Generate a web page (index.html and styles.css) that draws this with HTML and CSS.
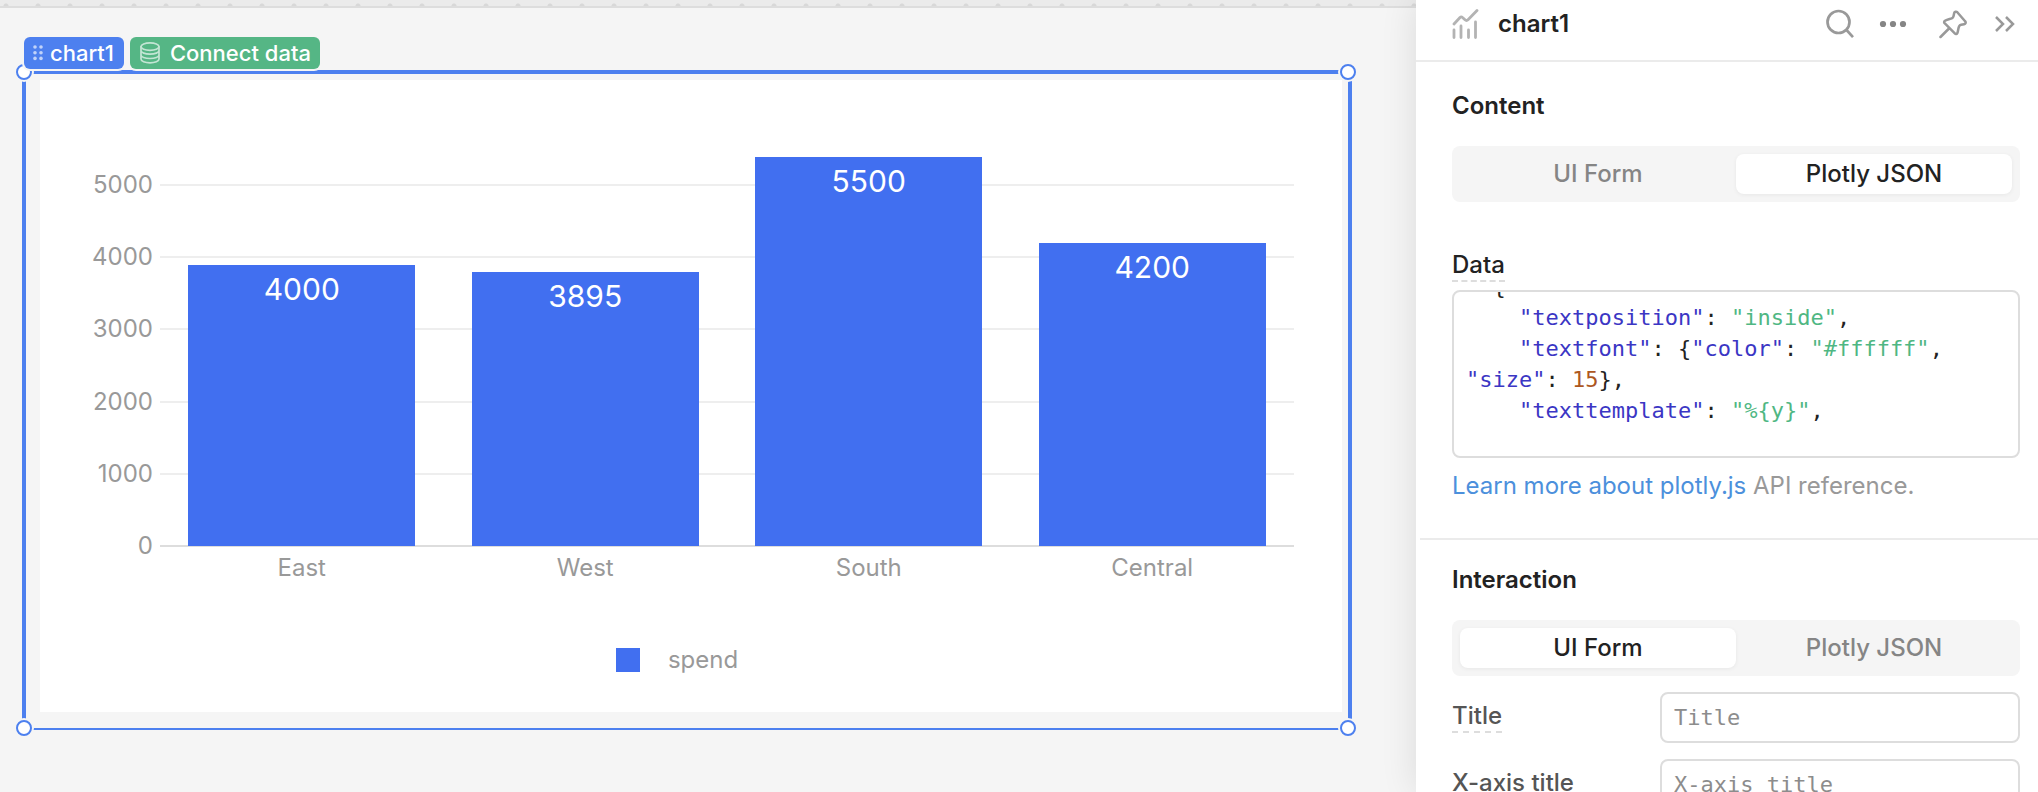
FILE: index.html
```html
<!DOCTYPE html>
<html lang="en">
<head>
<meta charset="utf-8">
<title>chart1</title>
<link rel="stylesheet" href="styles.css">
</head>
<body>
<div class="app">
  <main class="canvas">
    <div class="canvas-edge"></div>
    <div class="tags">
      <button class="tag tag-name" type="button">
        <svg width="10" height="16" viewBox="0 0 10 16" fill="currentColor" opacity=".65"><circle cx="2" cy="2" r="1.8"/><circle cx="8" cy="2" r="1.8"/><circle cx="2" cy="7.700" r="1.8"/><circle cx="8" cy="7.700" r="1.8"/><circle cx="2" cy="13.400" r="1.8"/><circle cx="8" cy="13.400" r="1.8"/></svg>
        <span>chart1</span>
      </button>
      <button class="tag tag-data" type="button">
        <svg width="20" height="22" viewBox="0 0 20 22" fill="none" stroke="currentColor" stroke-width="1.700" opacity=".65"><ellipse cx="10" cy="4.600" rx="9" ry="3.700"/><path d="M1 4.600v12.800c0 2 4 3.700 9 3.700s9-1.700 9-3.700V4.600M1 8.900c0 2 4 3.600 9 3.600s9-1.600 9-3.600M1 13.200c0 2 4 3.600 9 3.600s9-1.600 9-3.600" transform="translate(0 -.3)"/></svg>
        <span>Connect data</span>
      </button>
    </div>
    <section class="frame">
      <i class="handle handle-tl"></i><i class="handle handle-tr"></i><i class="handle handle-bl"></i><i class="handle handle-br"></i>
      <div class="card">
        <div class="plot">
          <ul class="scale">
            <li><span>5000</span></li><li><span>4000</span></li><li><span>3000</span></li><li><span>2000</span></li><li><span>1000</span></li><li class="zero"><span>0</span></li>
          </ul>
          <div class="bars">
            <div class="bar" style="height:70.9%">4000</div>
            <div class="bar" style="height:69.1%">3895</div>
            <div class="bar" style="height:98.1%">5500</div>
            <div class="bar" style="height:76.4%">4200</div>
          </div>
          <div class="names"><span>East</span><span>West</span><span>South</span><span>Central</span></div>
        </div>
        <div class="legend"><i class="swatch"></i><span>spend</span></div>
      </div>
    </section>
  </main>

  <aside class="panel">
    <header class="head">
      <svg width="28" height="30" viewBox="0 0 28 30" fill="none" stroke="#b3b3b3" stroke-width="2.800" stroke-linecap="round" stroke-linejoin="round"><path d="M2 15l6-6.500c1-1 1.500-1 2.500 0l2.500 2.300c1 1 2 1 3 0L25 1.500M2 21v7.500M9 17v11.500M16.500 21v7.500M23.500 13v15.500"/></svg>
      <h1 class="head-title">chart1</h1>
      <div class="actions">
        <button class="icon" type="button" aria-label="Search"><svg width="28" height="30" viewBox="0 0 28 30" fill="none" stroke="#999" stroke-width="2.700"><circle cx="12.500" cy="13" r="11"/><path d="M20.500 21l6.500 7.200"/></svg></button>
        <button class="icon" type="button" aria-label="More"><svg width="28" height="8" viewBox="0 0 28 8" fill="#858585"><circle cx="4" cy="4" r="3.100"/><circle cx="14" cy="4" r="3.100"/><circle cx="24" cy="4" r="3.100"/></svg></button>
        <button class="icon icon-pin" type="button" aria-label="Pin"><svg width="28" height="30" viewBox="0 0 28 30" fill="none" stroke="#999" stroke-width="2.500" stroke-linecap="round" stroke-linejoin="round"><path d="M1.500 28l8.500-8.500M18.300 3.200c-1-1-2.800-.5-3.100.9l-.7 3.100c-.2 1-.8 1.700-1.700 2.100-1.800.8-4.300.8-6.800 2.500-.9.600-1.200 1.500-.4 2.400L15.800 24.400c.9.900 2.100.700 2.600-.5.900-2.200.7-4.700 1.700-6.600.4-.8 1.100-1.300 2-1.500l3-.6c1.500-.3 2.100-1.900 1-3z"/></svg></button>
        <button class="icon" type="button" aria-label="Collapse"><svg width="22" height="18" viewBox="0 0 22 18" fill="none" stroke="#999" stroke-width="2.500"><path d="M2 2l7 7-7 7M12 2l7 7-7 7"/></svg></button>
      </div>
    </header>

    <section class="section">
      <h2 class="heading">Content</h2>
      <div class="segmented">
        <button class="segment" type="button">UI Form</button>
        <button class="segment is-active" type="button">Plotly JSON</button>
      </div>
      <div class="field-label"><span class="hint" id="data-label">Data</span></div>
      <div class="editor" role="textbox" aria-multiline="true" aria-labelledby="data-label" contenteditable="true" spellcheck="false"><div class="code">  {
    <b class="key">"textposition"</b>: <b class="str">"inside"</b>,
    <b class="key">"textfont"</b>: {<b class="key">"color"</b>: <b class="str">"#ffffff"</b>, <b class="key">"size"</b>: <b class="num">15</b>},
    <b class="key">"texttemplate"</b>: <b class="str">"%{y}"</b>,
</div></div>
      <p class="help"><a href="#">Learn more about plotly.js</a> API reference.</p>
    </section>

    <section class="section section-next">
      <h2 class="heading">Interaction</h2>
      <div class="segmented">
        <button class="segment is-active" type="button">UI Form</button>
        <button class="segment" type="button">Plotly JSON</button>
      </div>
      <div class="rows">
        <div class="row"><label for="title"><span class="hint">Title</span></label><input id="title" type="text" placeholder="Title"></div>
        <div class="row"><label for="xtitle"><span class="hint">X-axis title</span></label><input id="xtitle" type="text" placeholder="X-axis title"></div>
      </div>
    </section>
  </aside>
</div>
</body>
</html>
```

FILE: styles.css
```css
* { box-sizing: border-box; }
body { margin: 0; font-family: Inter, "Liberation Sans", sans-serif; color: #222; }
h1, h2, p, ul { margin: 0; padding: 0; }
button { border: 0; padding: 0; background: none; font: inherit; color: inherit; }
svg { display: block; flex: none; }

.app { display: flex; height: 100vh; overflow: hidden; }

/* Canvas */
.canvas { flex: 1; min-width: 0; display: flex; flex-direction: column; background: #f5f5f5; padding-bottom: 62px; }
.canvas-edge {
  flex: none; height: 8px; border-bottom: 2px solid #ddd;
  background: radial-gradient(circle at 6px 6px, #d8d8d8 2px, transparent 3px) 0 0 / 32px 8px, #ebebeb;
}
.tags { display: flex; gap: 6px; margin: 29px 0 1px 24px; position: relative; z-index: 2; }
.tag {
  display: flex; align-items: center; height: 32px; border-radius: 6px; color: #fff;
  font-size: 22px; font-weight: 500; line-height: 32px; white-space: nowrap; box-shadow: 0 0 0 2px #f5f5f5;
}
.tag-name { gap: 7px; padding: 0 10px 0 9px; background: #4d80ef; }
.tag-data { gap: 10px; padding: 0 9px 0 10px; background: #55b685; }

.frame {
  flex: 1; min-height: 0; display: flex; position: relative; margin: 0 64px 0 22px; padding: 6px 6px 16px 14px;
  border: 4px solid #4d80ef; border-bottom-width: 2px;
}
.handle {
  position: absolute; width: 16px; height: 16px; border: 2px solid #4d80ef; border-radius: 50%;
  background: #fff; box-shadow: 0 0 0 2px #f5f5f5;
}
.handle-tl, .handle-tr { top: -10px; }
.handle-bl, .handle-br { bottom: -8px; }
.handle-tl, .handle-bl { left: -10px; }
.handle-tr, .handle-br { right: -8px; }

.card { flex: 1; display: flex; flex-direction: column; background: #fff; padding: 69px 48px 38px; color: #999; font-size: 24px; font-weight: 400; line-height: 28px; }

/* Bar chart: six scale rows share the height; the bars end at the middle of the last row */
.plot { flex: 1; display: grid; grid-template-columns: 72px 1fr; grid-template-rows: 11fr 1fr; }
.scale { grid-area: 1 / 1 / 3 / 3; display: flex; flex-direction: column; list-style: none; }
.scale li { flex: 1; display: flex; align-items: center; gap: 7px; }
.scale li::after { content: ""; flex: 1; height: 2px; background: #eee; }
.scale .zero::after { background: #ddd; }
.scale span { width: 65px; text-align: right; }
.bars { grid-area: 1 / 2; display: grid; grid-template-columns: repeat(4, 1fr); align-items: end; }
.bar { width: 80%; margin: 0 auto; padding-top: 6px; background: #416ff0; color: #fff; font-size: 30px; line-height: 36px; text-align: center; }
.names { grid-area: 2 / 2; display: grid; grid-template-columns: repeat(4, 1fr); align-items: end; text-align: center; }
.legend { display: flex; justify-content: center; align-items: center; gap: 28px; margin: 64px 28px 0 0; }
.swatch { width: 24px; height: 24px; background: #416ff0; }

/* Property panel */
.panel { flex: 0 0 622px; position: relative; background: #fff; box-shadow: 0 0 34px rgba(0, 0, 0, .11); font-size: 24px; line-height: 28px; }
.head { display: flex; align-items: center; gap: 18px; height: 62px; padding: 0 22px 12px 36px; border-bottom: 2px solid #ebebeb; }
.head-title, .heading { font-size: 24px; font-weight: 600; line-height: 28px; }
.actions { display: flex; align-items: center; gap: 25px; margin-left: auto; }
.icon-pin { margin: 0 2px 0 7px; }

.section { padding: 30px 18px 38px 36px; }
.section-next { margin-left: 4px; padding-top: 26px; padding-left: 32px; border-top: 2px solid #ebebeb; }
.segmented { display: grid; grid-template-columns: 1fr 1fr; margin-top: 26px; padding: 8px; border-radius: 8px; background: #f5f5f5; }
.segment { height: 40px; border-radius: 8px; color: #858585; font-weight: 500; }
.segment.is-active { background: #fff; color: #222; box-shadow: 0 1px 4px rgba(0, 0, 0, .06); }

.hint { display: inline-block; padding-bottom: 1px; border-bottom: 2px dashed #ddd; }
.field-label { display: flex; margin-top: 49px; font-weight: 500; }
.editor {
  display: flex; align-items: flex-end; height: 168px; margin-top: 8px; padding: 0 12px 0;
  overflow: hidden; border: 2px solid #ddd; border-radius: 8px; outline: 0;
}
.code { flex: 1; padding-bottom: 30px; font: 22px/31px "DejaVu Sans Mono", "Liberation Mono", monospace; white-space: pre-wrap; }
.code b { font-weight: 400; }
.key { color: #3b36c4; }
.str { color: #4fb783; }
.num { color: #ad571f; }
.help { margin-top: 14px; color: #999; }
.help a { color: #4c90dc; text-decoration: none; }

.rows { display: grid; gap: 16px; margin-top: 16px; }
.row { display: grid; grid-template-columns: 208px 1fr; align-items: center; }
.row label { color: #555; font-weight: 500; }
.row input {
  min-width: 0; height: 51px; padding: 0 12px; border: 2px solid #ddd; border-radius: 8px; background: #fff;
  font: 22px "DejaVu Sans Mono", "Liberation Mono", monospace;
}
.row input::placeholder { color: #8c8c8c; opacity: 1; }
```
